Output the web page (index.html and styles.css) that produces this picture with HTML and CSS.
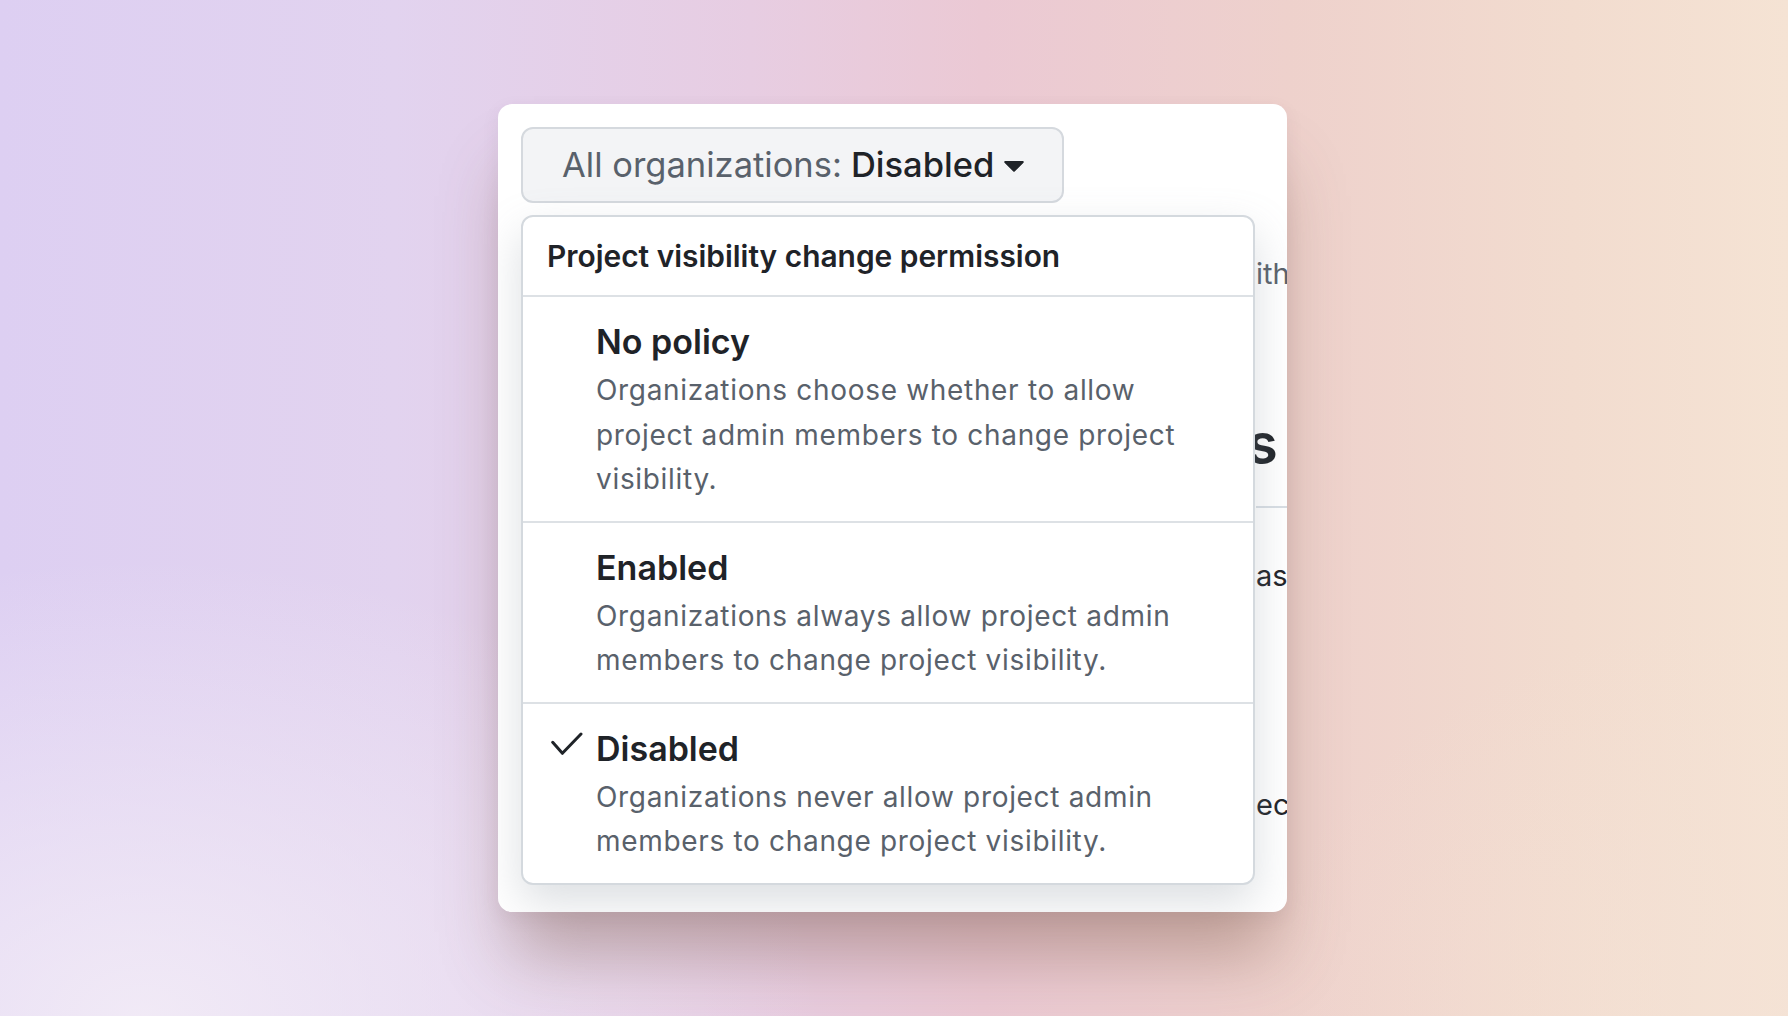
FILE: index.html
```html
<!DOCTYPE html>
<html lang="en">
<head>
<meta charset="utf-8">
<title>Project visibility change permission</title>
<link rel="stylesheet" href="styles.css">
</head>
<body>
<main class="stage">
  <section class="card">
    <button class="select-btn" type="button">
      <span class="select-btn__label">All organizations:</span>
      <span class="select-btn__value">Disabled</span>
      <svg class="caret" width="20" height="11" viewBox="0 0 20 11" aria-hidden="true"><path d="M1.2 0h17.6a1 1 0 0 1 .7 1.7l-8.8 8.8a1 1 0 0 1-1.4 0L.5 1.7A1 1 0 0 1 1.2 0z"/></svg>
    </button>

    <div class="behind">
      <p class="behind__muted">ith</p>
      <h2 class="behind__heading">s</h2>
      <div class="behind__rule"></div>
      <p class="behind__text">as</p>
      <p class="behind__text behind__text--far">ec</p>
    </div>

    <div class="menu" role="menu">
      <div class="menu__header">Project visibility change permission</div>

      <div class="menu__item" role="menuitemradio" aria-checked="false">
        <div class="menu__check"></div>
        <div class="menu__body">
          <div class="menu__title">No policy</div>
          <div class="menu__desc">Organizations choose whether to allow project admin members to change project visibility.</div>
        </div>
      </div>

      <div class="menu__item" role="menuitemradio" aria-checked="false">
        <div class="menu__check"></div>
        <div class="menu__body">
          <div class="menu__title">Enabled</div>
          <div class="menu__desc">Organizations always allow project admin members to change project visibility.</div>
        </div>
      </div>

      <div class="menu__item menu__item--last" role="menuitemradio" aria-checked="true">
        <div class="menu__check">
          <svg class="check" width="34" height="25" viewBox="0 0 34 25" aria-hidden="true"><polyline points="2.7,10.3 12.4,21.3 31,2" /></svg>
        </div>
        <div class="menu__body">
          <div class="menu__title">Disabled</div>
          <div class="menu__desc">Organizations never allow project admin members to change project visibility.</div>
        </div>
      </div>
    </div>
  </section>
</main>
</body>
</html>
```
FILE: styles.css
```css
* { box-sizing: border-box; }

html, body {
  margin: 0;
  height: 100%;
}

body {
  font-family: Inter, "Noto Sans", "Liberation Sans", sans-serif;
  color: #1f2328;
  background:
    radial-gradient(ellipse 38% 45% at 8% 100%, rgba(244, 238, 247, 0.85), rgba(244, 238, 247, 0) 100%),
    radial-gradient(ellipse 30% 40% at 100% 100%, rgba(244, 226, 214, 0.6), rgba(244, 226, 214, 0) 100%),
    linear-gradient(90deg, #ddcff2 0%, #e2d3ef 22%, #e7cde2 42%, #ebc9d4 55%, #eed1cc 72%, #f2dccf 88%, #f5e3d4 100%);
}

.stage {
  height: 100%;
  display: flex;
  align-items: center;
  justify-content: center;
}

.card {
  position: relative;
  width: 789px;
  height: 808px;
  margin-right: 3px;
  padding: 23px;
  background: #ffffff;
  border-radius: 14px;
  overflow: hidden;
  box-shadow:
    0 56px 64px -14px rgba(120, 85, 70, 0.42),
    0 6px 18px rgba(90, 70, 90, 0.08);
}

/* Select button */
.select-btn {
  display: inline-flex;
  align-items: center;
  height: 76px;
  padding: 0 38px 0 39px;
  border: 2px solid #d5d9de;
  border-radius: 12px;
  background: #f3f4f6;
  font-family: inherit;
  font-size: 34.5px;
  line-height: 1;
  cursor: pointer;
}

.select-btn__label {
  color: #59616b;
  font-weight: 400;
}

.select-btn__value {
  margin-left: 9px;
  color: #1f2328;
  font-weight: 500;
}

.caret {
  margin-left: 10px;
  margin-top: 3px;
  fill: #1f2328;
}

/* Page content lying under the open menu */
.behind {
  margin-left: 735px;
  white-space: nowrap;
}

.behind p,
.behind h2 {
  margin: 0;
}

.behind__muted {
  margin-top: 49px !important;
  font-size: 29px;
  line-height: 44px;
  color: #59616b;
}

.behind__heading {
  margin-top: 116px !important;
  text-indent: -9px;
  font-size: 56px;
  line-height: 64px;
  font-weight: 600;
  color: #1f2328;
}

.behind__rule {
  margin-top: 30px;
  width: 200px;
  border-top: 2px solid #d8dee4;
}

.behind__text {
  margin-top: 46px !important;
  font-size: 29px;
  line-height: 44px;
  color: #1f2328;
}

.behind__text--far {
  margin-top: 185px !important;
}

/* Open menu */
.menu {
  position: absolute;
  top: 111px;
  left: 23px;
  width: 734px;
  background: #ffffff;
  border: 2px solid #d4d9de;
  border-radius: 12px;
  overflow: hidden;
  box-shadow: 0 18px 44px rgba(140, 149, 159, 0.30);
}

.menu__header {
  height: 80px;
  padding: 0 24px;
  font-size: 29.9px;
  line-height: 78px;
  font-weight: 600;
  color: #1f2328;
  border-bottom: 2px solid #dde1e5;
}

.menu__item {
  display: flex;
  padding: 25px 24px 19px 0;
  border-bottom: 2px solid #dde1e5;
}

.menu__item--last {
  border-bottom: 0;
}

.menu__check {
  flex: 0 0 73px;
  padding-left: 27px;
  padding-top: 3px;
}

.check {
  display: block;
  fill: none;
  stroke: #1f2328;
  stroke-width: 3;
  stroke-linecap: round;
  stroke-linejoin: round;
}

.menu__body {
  flex: 1;
  min-width: 0;
}

.menu__title {
  font-size: 34px;
  line-height: 40px;
  font-weight: 600;
  color: #1f2328;
}

.menu__desc {
  margin-top: 6px;
  max-width: 615px;
  font-size: 28px;
  letter-spacing: 0.68px;
  line-height: 44.5px;
  color: #59616b;
}
```
